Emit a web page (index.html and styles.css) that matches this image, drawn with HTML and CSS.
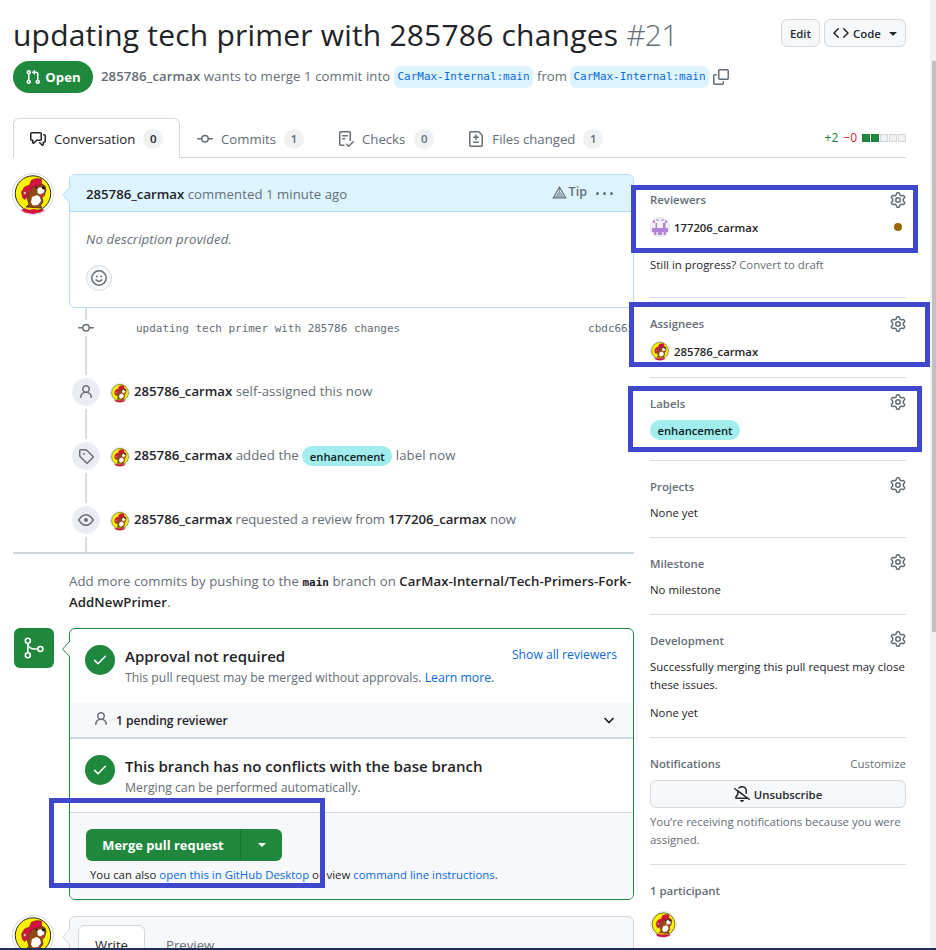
FILE: index.html
```html
<!DOCTYPE html>
<html lang="en">
<head>
<meta charset="utf-8">
<title>updating tech primer with 285786 changes #21</title>
<link rel="stylesheet" href="styles.css">
</head>
<body>
<svg class="defs" aria-hidden="true">
  <symbol id="pr" viewBox="0 0 16 16"><path d="M1.5 3.25a2.25 2.25 0 1 1 3 2.122v5.256a2.251 2.251 0 1 1-1.5 0V5.372A2.25 2.25 0 0 1 1.5 3.25Zm5.677-.177L9.573.677A.25.25 0 0 1 10 .854V2.5h1A2.5 2.5 0 0 1 13.5 5v5.628a2.251 2.251 0 1 1-1.5 0V5a1 1 0 0 0-1-1h-1v1.646a.25.25 0 0 1-.427.177L7.177 3.427a.25.25 0 0 1 0-.354ZM3.75 2.5a.75.75 0 1 0 0 1.5.75.75 0 0 0 0-1.5Zm0 9.5a.75.75 0 1 0 0 1.5.75.75 0 0 0 0-1.5Zm8.25.75a.75.75 0 1 0 1.5 0 .75.75 0 0 0-1.5 0Z"/></symbol>
  <symbol id="talk" viewBox="0 0 16 16"><path d="M1.75 1h8.5c.966 0 1.75.784 1.75 1.75v5.5A1.75 1.75 0 0 1 10.25 10H7.061l-2.574 2.573A1.458 1.458 0 0 1 2 11.543V10h-.25A1.75 1.75 0 0 1 0 8.25v-5.5C0 1.784.784 1 1.75 1ZM1.5 2.75v5.5c0 .138.112.25.25.25h1a.75.75 0 0 1 .75.75v2.19l2.72-2.72a.749.749 0 0 1 .53-.22h3.5a.25.25 0 0 0 .25-.25v-5.5a.25.25 0 0 0-.25-.25h-8.5a.25.25 0 0 0-.25.25Zm13 2a.25.25 0 0 0-.25-.25h-.5a.75.75 0 0 1 0-1.5h.5c.966 0 1.75.784 1.75 1.75v5.5A1.75 1.75 0 0 1 14.25 12H14v1.543a1.458 1.458 0 0 1-2.487 1.03L9.22 12.28a.749.749 0 0 1 .326-1.275.749.749 0 0 1 .734.215l2.22 2.22v-2.19a.75.75 0 0 1 .75-.75h1a.25.25 0 0 0 .25-.25Z"/></symbol>
  <symbol id="commit" viewBox="0 0 16 16"><path d="M11.93 8.5a4.002 4.002 0 0 1-7.86 0H.75a.75.75 0 0 1 0-1.5h3.32a4.002 4.002 0 0 1 7.86 0h3.32a.75.75 0 0 1 0 1.5Zm-1.43-.75a2.5 2.5 0 1 0-5 0 2.5 2.5 0 0 0 5 0Z"/></symbol>
  <symbol id="checks" viewBox="0 0 16 16"><path d="M2.5 1.75v11.5c0 .138.112.25.25.25h3.17a.75.75 0 0 1 0 1.5H2.75A1.75 1.75 0 0 1 1 13.25V1.75C1 .784 1.784 0 2.75 0h8.5C12.216 0 13 .784 13 1.75v7.736a.75.75 0 0 1-1.5 0V1.75a.25.25 0 0 0-.25-.25h-8.5a.25.25 0 0 0-.25.25Zm13.274 9.537v-.001l-4.557 4.45a.75.75 0 0 1-1.055-.008l-1.943-1.95a.75.75 0 0 1 1.062-1.058l1.419 1.425 4.026-3.932a.75.75 0 1 1 1.048 1.074ZM4.75 4h4.5a.75.75 0 0 1 0 1.5h-4.5a.75.75 0 0 1 0-1.5ZM4 7.75A.75.75 0 0 1 4.75 7h2a.75.75 0 0 1 0 1.5h-2A.75.75 0 0 1 4 7.75Z"/></symbol>
  <symbol id="diff" viewBox="0 0 16 16"><path d="M1 1.75C1 .784 1.784 0 2.75 0h7.586c.464 0 .909.184 1.237.513l2.914 2.914c.329.328.513.773.513 1.237v9.586A1.75 1.75 0 0 1 13.25 16H2.75A1.75 1.75 0 0 1 1 14.25Zm1.75-.25a.25.25 0 0 0-.25.25v12.5c0 .138.112.25.25.25h10.5a.25.25 0 0 0 .25-.25V4.664a.25.25 0 0 0-.073-.177l-2.914-2.914a.25.25 0 0 0-.177-.073ZM8 3.25a.75.75 0 0 1 .75.75v1.5h1.5a.75.75 0 0 1 0 1.5h-1.5v1.5a.75.75 0 0 1-1.5 0V7h-1.5a.75.75 0 0 1 0-1.5h1.5V4A.75.75 0 0 1 8 3.25Zm-3 8a.75.75 0 0 1 .75-.75h4.5a.75.75 0 0 1 0 1.5h-4.5a.75.75 0 0 1-.75-.75Z"/></symbol>
  <symbol id="copy" viewBox="0 0 16 16"><path d="M0 6.75C0 5.784.784 5 1.75 5h1.5a.75.75 0 0 1 0 1.5h-1.5a.25.25 0 0 0-.25.25v7.5c0 .138.112.25.25.25h7.5a.25.25 0 0 0 .25-.25v-1.5a.75.75 0 0 1 1.5 0v1.5A1.75 1.75 0 0 1 9.25 16h-7.5A1.75 1.75 0 0 1 0 14.25Z M5 1.75C5 .784 5.784 0 6.75 0h7.5C15.216 0 16 .784 16 1.75v7.5A1.75 1.75 0 0 1 14.25 11h-7.5A1.75 1.75 0 0 1 5 9.25Zm1.75-.25a.25.25 0 0 0-.25.25v7.5c0 .138.112.25.25.25h7.5a.25.25 0 0 0 .25-.25v-7.5a.25.25 0 0 0-.25-.25Z"/></symbol>
  <symbol id="code" viewBox="0 0 16 16"><path d="m11.28 3.22 4.25 4.25a.75.75 0 0 1 0 1.06l-4.25 4.25a.749.749 0 0 1-1.275-.326.749.749 0 0 1 .215-.734L13.94 8l-3.72-3.72a.749.749 0 0 1 .326-1.275.749.749 0 0 1 .734.215Zm-6.56 0a.751.751 0 0 1 1.042.018.751.751 0 0 1 .018 1.042L2.06 8l3.72 3.72a.749.749 0 0 1-.326 1.275.749.749 0 0 1-.734-.215L.47 8.53a.75.75 0 0 1 0-1.06Z"/></symbol>
  <symbol id="person" viewBox="0 0 16 16"><path d="M10.561 8.073a6.005 6.005 0 0 1 3.432 5.142.75.75 0 1 1-1.498.07 4.5 4.5 0 0 0-8.99 0 .75.75 0 0 1-1.498-.07 6.004 6.004 0 0 1 3.431-5.142 3.999 3.999 0 1 1 5.123 0ZM10.5 5a2.5 2.5 0 1 0-5 0 2.5 2.5 0 0 0 5 0Z"/></symbol>
  <symbol id="tag" viewBox="0 0 16 16"><path d="M1 7.775V2.75C1 1.784 1.784 1 2.75 1h5.025c.464 0 .91.184 1.238.513l6.25 6.25a1.75 1.75 0 0 1 0 2.474l-5.026 5.026a1.75 1.75 0 0 1-2.474 0l-6.25-6.25A1.752 1.752 0 0 1 1 7.775Zm1.5 0c0 .066.026.13.073.177l6.25 6.25a.25.25 0 0 0 .354 0l5.025-5.025a.25.25 0 0 0 0-.354l-6.25-6.25a.25.25 0 0 0-.177-.073H2.75a.25.25 0 0 0-.25.25ZM6 5a1 1 0 1 1 0 2 1 1 0 0 1 0-2Z"/></symbol>
  <symbol id="eye" viewBox="0 0 16 16"><path d="M8 2c1.981 0 3.671.992 4.933 2.078 1.27 1.091 2.187 2.345 2.637 3.023a1.62 1.62 0 0 1 0 1.798c-.45.678-1.367 1.932-2.637 3.023C11.67 13.008 9.981 14 8 14c-1.981 0-3.671-.992-4.933-2.078C1.797 10.83.88 9.576.43 8.898a1.62 1.62 0 0 1 0-1.798c.45-.677 1.367-1.931 2.637-3.022C4.33 2.992 6.019 2 8 2ZM1.679 7.932a.12.12 0 0 0 0 .136c.411.622 1.241 1.75 2.366 2.717C5.176 11.758 6.527 12.5 8 12.5c1.473 0 2.825-.742 3.955-1.715 1.124-.967 1.954-2.096 2.366-2.717a.12.12 0 0 0 0-.136c-.412-.621-1.242-1.75-2.366-2.717C10.824 4.242 9.473 3.5 8 3.5c-1.473 0-2.825.742-3.955 1.715-1.124.967-1.954 2.096-2.366 2.717ZM8 10a2 2 0 1 1-.001-3.999A2 2 0 0 1 8 10Z"/></symbol>
  <symbol id="gear" viewBox="0 0 16 16"><path d="M8 0a8.2 8.2 0 0 1 .701.031C9.444.095 9.99.645 10.16 1.29l.288 1.107c.018.066.079.158.212.224.231.114.454.243.668.386.123.082.233.09.299.071l1.103-.303c.644-.176 1.392.021 1.82.63.27.385.506.792.704 1.218.315.675.111 1.422-.364 1.891l-.814.806c-.049.048-.098.147-.088.294.016.257.016.515 0 .772-.01.147.038.246.088.294l.814.806c.475.469.679 1.216.364 1.891a7.977 7.977 0 0 1-.704 1.217c-.428.61-1.176.807-1.82.63l-1.102-.302c-.067-.019-.177-.011-.3.071a5.909 5.909 0 0 1-.668.386c-.133.066-.194.158-.211.224l-.29 1.106c-.168.646-.715 1.196-1.458 1.26a8.006 8.006 0 0 1-1.402 0c-.743-.064-1.289-.614-1.458-1.26l-.289-1.106c-.018-.066-.079-.158-.212-.224a5.738 5.738 0 0 1-.668-.386c-.123-.082-.233-.09-.299-.071l-1.103.303c-.644.176-1.392-.021-1.82-.63a8.12 8.12 0 0 1-.704-1.218c-.315-.675-.111-1.422.363-1.891l.815-.806c.05-.048.098-.147.088-.294a6.214 6.214 0 0 1 0-.772c.01-.147-.038-.246-.088-.294l-.815-.806C.635 6.045.431 5.298.746 4.623a7.92 7.92 0 0 1 .704-1.217c.428-.61 1.176-.807 1.82-.63l1.102.302c.067.019.177.011.3-.071.214-.143.437-.272.668-.386.133-.066.194-.158.211-.224l.29-1.106C6.009.645 6.556.095 7.299.03 7.53.01 7.764 0 8 0Zm-.571 1.525c-.036.003-.108.036-.137.146l-.289 1.105c-.147.561-.549.967-.998 1.189-.173.086-.34.183-.5.29-.417.278-.97.423-1.529.27l-1.103-.303c-.109-.03-.175.016-.195.045-.22.312-.412.644-.573.99-.014.031-.021.11.059.19l.815.806c.411.406.562.957.53 1.456a4.709 4.709 0 0 0 0 .582c.032.499-.119 1.05-.53 1.456l-.815.806c-.081.08-.073.159-.059.19.162.346.353.677.573.989.02.03.085.076.195.046l1.102-.303c.56-.153 1.113-.008 1.53.27.161.107.328.204.501.29.447.222.85.629.997 1.189l.289 1.105c.029.109.101.143.137.146a6.6 6.6 0 0 0 1.142 0c.036-.003.108-.036.137-.146l.289-1.105c.147-.561.549-.967.998-1.189.173-.086.34-.183.5-.29.417-.278.97-.423 1.529-.27l1.103.303c.109.029.175-.016.195-.045.22-.313.411-.644.573-.99.014-.031.021-.11-.059-.19l-.815-.806c-.411-.406-.562-.957-.53-1.456a4.709 4.709 0 0 0 0-.582c-.032-.499.119-1.05.53-1.456l.815-.806c.081-.08.073-.159.059-.19a6.464 6.464 0 0 0-.573-.989c-.02-.03-.085-.076-.195-.046l-1.102.303c-.56.153-1.113.008-1.53-.27a4.44 4.44 0 0 0-.501-.29c-.447-.222-.85-.629-.997-1.189l-.289-1.105c-.029-.11-.101-.143-.137-.146a6.6 6.6 0 0 0-1.142 0ZM11 8a3 3 0 1 1-6 0 3 3 0 0 1 6 0ZM9.5 8a1.5 1.5 0 1 0-3.001.001A1.5 1.5 0 0 0 9.5 8Z"/></symbol>
  <symbol id="bell" viewBox="0 0 16 16"><path d="m4.182 4.31.016.011 10.104 7.316.013.01 1.375.996a.75.75 0 1 1-.88 1.214L13.626 13H2.518a1.516 1.516 0 0 1-1.263-2.36l1.703-2.554A.255.255 0 0 0 3 7.947V5.305L.31 3.357a.75.75 0 1 1 .88-1.214Zm7.373 7.19L4.5 6.391v1.556c0 .346-.102.683-.294.97l-1.703 2.556a.017.017 0 0 0-.003.01c0 .005.002.009.005.012l.006.004.007.001ZM8 1.5c-.997 0-1.895.416-2.534 1.086A.75.75 0 1 1 4.38 1.55 5 5 0 0 1 13 5v2.373a.75.75 0 0 1-1.5 0V5A3.5 3.5 0 0 0 8 1.5ZM8 16a2 2 0 0 1-1.985-1.75c-.017-.137.097-.25.235-.25h3.5c.138 0 .252.113.235.25A2 2 0 0 1 8 16Z"/></symbol>
  <symbol id="tick" viewBox="0 0 16 16"><path d="M2.6 8.4 6 11.8l7.4-7.6" fill="none" stroke="currentColor" stroke-width="1.5" stroke-linecap="round" stroke-linejoin="round"/></symbol>
  <symbol id="beaver" viewBox="0 0 42 42">
    <circle cx="21" cy="21" r="20.5" fill="#fff" stroke="#d4d8dc"/>
    <circle cx="21" cy="20.500" r="17.700" fill="#fdf100" stroke="#2b2a1c"/>
    <path d="M9 37l4-1.500 4 1.500 5-1 5 1 4-1 1 1.500-4 2-7 1.500-8-1.500z" fill="#d31342"/>
    <path d="M14 34l3-3-2-6 3-6 2-6 8-3 5 3 1 4-2 6-2 1 1 5-3 4 2 1-1 1z" fill="#8f4a18" stroke="#43200c" stroke-width=".7"/>
    <path d="M20 24l5-2 3 2 1 4-3 4-5 .5-2-3z" fill="#fff"/>
    <path d="M25 15.500l3-1.500 4 1 .5 4-3 3-4-1.500z" fill="#fff" stroke="#5a3017" stroke-width=".4"/>
    <path d="M24 13.500l1 2" stroke="#111" stroke-width="1.400"/>
    <circle cx="31.500" cy="14.800" r="1.600" fill="#141414"/>
    <path d="M28.500 21l2.500-1 .5 3.500-2 .5z" fill="#d9304e"/>
    <path d="M9.500 19l3-5 5-2 2-5 5-1.500 5 .5v5.500l-9 2.500-3 4-2 6-3 2.500-2-2z" fill="#d31342" stroke="#7c0d2b" stroke-width=".5"/>
    <circle cx="12.800" cy="20" r="1.700" fill="#e8b9a0" stroke="#6a2a18" stroke-width=".6"/>
  </symbol>
</svg>

<div class="page">
  <header class="head">
    <h1 class="title">updating tech primer with 285786 changes <span class="num">#21</span></h1>
    <div class="actions">
      <button class="btn btn-edit">Edit</button>
      <button class="btn btn-code"><svg class="i"><use href="#code"/></svg>Code<span class="caret"></span></button>
    </div>
  </header>
  <div class="meta">
    <span class="state"><svg class="i"><use href="#pr"/></svg>Open</span>
    <span class="wants"><b>285786_carmax</b> wants to merge 1 commit into</span>
    <span class="branch">CarMax-Internal:main</span>
    <span class="from">from</span>
    <span class="branch">CarMax-Internal:main</span>
    <svg class="i copy"><use href="#copy"/></svg>
  </div>
  <nav class="tabs">
    <a class="tab on"><svg class="i"><use href="#talk"/></svg><span>Conversation</span><span class="count">0</span></a>
    <a class="tab"><svg class="i"><use href="#commit"/></svg><span>Commits</span><span class="count">1</span></a>
    <a class="tab checks"><svg class="i"><use href="#checks"/></svg><span>Checks</span><span class="count">0</span></a>
    <a class="tab"><svg class="i"><use href="#diff"/></svg><span>Files changed</span><span class="count">1</span></a>
    <div class="stat"><span class="plus">+2</span><span class="minus">−0</span><span class="sq"><i class="g"></i><i class="g"></i><i></i><i></i><i></i></span></div>
  </nav>

  <div class="cols">
    <main class="main">
      <section class="comment">
        <svg class="ava42"><use href="#beaver"/></svg>
        <div class="bubble blue">
          <svg class="notch" viewBox="0 0 8 16"><path d="M8 0 .7 8 8 16" fill="#ddf4ff" stroke="#b3dcfb"/></svg>
          <div class="bhead"><span><b>285786_carmax</b> commented 1 minute ago</span>
            <span class="tip"><svg class="tri" viewBox="0 0 16 14" fill="none" stroke="#656d76"><path d="M8 1.200 14.800 12.800H1.200Z" stroke-width="1.200"/><path d="M8 5.800 11.200 11H4.800Z" stroke-width=".9"/><path d="M8 1v5M1.500 12.800l3.500-2M14.500 12.800l-3.500-2M8 8l1 1.800H7z" stroke-width=".7"/></svg>Tip</span>
            <span class="dots"><i></i><i></i><i></i></span>
          </div>
          <div class="bbody"><em>No description provided.</em>
            <span class="react"><svg class="smile" viewBox="0 0 16 16" fill="none" stroke="#656d76" stroke-width="1.500"><circle cx="8" cy="8" r="7.200"/><path d="M5.200 9.800c1.200 1.900 4.400 1.900 5.600 0" stroke-linecap="round"/><path d="M5 6.500h1.800M9.200 6.500H11" stroke-width="1.700"/></svg></span>
          </div>
        </div>
      </section>
      <section class="line">
        <div class="crow"><span class="cicon"><svg class="i"><use href="#commit"/></svg></span><span class="cmsg">updating tech primer with 285786 changes</span><span class="sha">cbdc665</span></div>
        <div class="ev"><span class="badge"><svg class="i"><use href="#person"/></svg></span><svg class="ava20"><use href="#beaver"/></svg><span class="evt"><b>285786_carmax</b> self-assigned this now</span></div>
        <div class="ev"><span class="badge"><svg class="i"><use href="#tag"/></svg></span><svg class="ava20"><use href="#beaver"/></svg><span class="evt"><b>285786_carmax</b> added the <span class="label">enhancement</span> label now</span></div>
        <div class="ev"><span class="badge"><svg class="i"><use href="#eye"/></svg></span><svg class="ava20"><use href="#beaver"/></svg><span class="evt tight"><b>285786_carmax</b> requested a review from <b>177206_carmax</b> now</span></div>
      </section>
      <p class="push">Add more commits by pushing to the <code>main</code> branch on <b>CarMax-Internal/Tech-Primers-Fork-<br>AddNewPrimer</b>.</p>
      <section class="merge">
        <span class="micon"><svg viewBox="0 0 24 24" fill="none" stroke="#fff" stroke-width="1.600"><circle cx="5.800" cy="4.800" r="2.500"/><circle cx="5.800" cy="19.200" r="2.500"/><circle cx="18.400" cy="13" r="2.500"/><path d="M5.800 7.300v9.400M5.800 7.500c.4 3.500 3.500 5.500 7 5.500h3"/></svg></span>
        <div class="bubble green">
          <svg class="notch" viewBox="0 0 8 16"><path d="M8 0 .7 8 8 16" fill="#fff" stroke="#1f883d"/></svg>
          <div class="mrow r1"><span class="ok"><svg class="i"><use href="#tick"/></svg></span><div class="mtxt"><h3>Approval not required</h3><p>This pull request may be merged without approvals. <a>Learn more.</a></p></div><a class="show">Show all reviewers</a></div>
          <div class="pend"><svg class="i"><use href="#person"/></svg><span>1 pending reviewer</span><svg class="chev" viewBox="0 0 16 16"><path d="M3.500 6 8 10.500 12.500 6" fill="none" stroke="#1f2328" stroke-width="1.700"/></svg></div>
          <div class="mrow r2"><span class="ok"><svg class="i"><use href="#tick"/></svg></span><div class="mtxt"><h3>This branch has no conflicts with the base branch</h3><p>Merging can be performed automatically.</p></div></div>
          <div class="mfoot">
            <div class="mbtn"><span class="mb1">Merge pull request</span><span class="mb2"><i class="caret"></i></span></div>
            <p>You can also <a>open this in GitHub Desktop</a> or view <a>command line instructions</a>.</p>
          </div>
        </div>
      </section>
      <section class="comment write">
        <svg class="ava42"><use href="#beaver"/></svg>
        <div class="bubble gray">
          <svg class="notch" viewBox="0 0 8 16"><path d="M8 0 .7 8 8 16" fill="#f6f8fa" stroke="#d0d7de"/></svg>
          <span class="wtab">Write</span><span class="ptab">Preview</span>
        </div>
      </section>
    </main>

    <aside class="side">
      <section class="s1"><div class="st">Reviewers<svg class="i"><use href="#gear"/></svg></div>
        <div class="user"><svg class="ava20" viewBox="0 0 20 20"><circle cx="10" cy="10" r="9.700" fill="#f0f0f0" stroke="#d9dcdf" stroke-width=".6"/><path d="M3 3.500h2v2.500h2v5h2V3.500h-3v-1h3v8.500h2V2.500h3v1h-3V11h2V6h2V3.500h2V6h-1.500v5H18v4h-2v3h-2.500v-3h-1.500v3H8v-3H6.500v3H4v-3H2v-4h3.500V6H3z" fill="#b283d8"/></svg><span>177206_carmax</span><i class="dot"></i></div>
        <p class="draft">Still in progress? <span>Convert to draft</span></p></section>
      <section class="s2"><div class="st">Assignees<svg class="i"><use href="#gear"/></svg></div>
        <div class="user"><svg class="ava20"><use href="#beaver"/></svg><span>285786_carmax</span></div></section>
      <section class="s3"><div class="st up">Labels<svg class="i"><use href="#gear"/></svg></div><span class="label">enhancement</span></section>
      <section class="s4"><div class="st up">Projects<svg class="i"><use href="#gear"/></svg></div><p>None yet</p></section>
      <section class="s4"><div class="st up">Milestone<svg class="i"><use href="#gear"/></svg></div><p>No milestone</p></section>
      <section class="s6"><div class="st up">Development<svg class="i"><use href="#gear"/></svg></div><p>Successfully merging this pull request may close<br>these issues.</p><p class="none">None yet</p></section>
      <section class="s7"><div class="st">Notifications<span>Customize</span></div><button class="btn wide"><svg class="i"><use href="#bell"/></svg>Unsubscribe</button><p class="why">You’re receiving notifications because you were<br>assigned.</p></section>
      <section class="s8"><div class="st">1 participant</div><svg class="ava26"><use href="#beaver"/></svg></section>
    </aside>
  </div>

  <div class="mark m1"></div><div class="mark m2"></div><div class="mark m3"></div><div class="mark m4"></div>
  <div class="scroll"><div class="thumb"></div></div>
  <div class="bottom"></div>
</div>
</body>
</html>
```
FILE: styles.css
```css
* { box-sizing: border-box; }
body { margin: 0; background: #fff; color: #1f2328; font-family: "Open Sans", "Noto Sans", sans-serif; font-size: 13.2px; line-height: 20px; }
h1, h3, p { margin: 0; font-weight: 400; }
b { font-weight: 600; }
a { color: #0969da; }
button { font-family: inherit; }
.defs { position: absolute; width: 0; height: 0; }
.page { position: relative; width: 936px; height: 950px; overflow: hidden; }
.i { width: 16px; height: 16px; fill: currentColor; flex: none; display: block; }

.head { display: flex; justify-content: space-between; height: 61px; padding: 15px 30px 0 13px; }
.title { font-size: 30px; line-height: 40px; white-space: nowrap; letter-spacing: .2px; }
.num { font-weight: 300; color: #656d76; letter-spacing: -.7px; }
.actions { display: flex; gap: 4px; padding-top: 4px; }
.btn { display: flex; align-items: center; justify-content: center; height: 28px; padding: 1px 8px 0; border: 1px solid #d5d9dd; border-radius: 6px; background: #f6f8fa; color: #24292f; font-size: 11.4px; font-weight: 600; line-height: 18px; }
.btn-edit { width: 39px; padding: 1px 0 0; }
.caret { width: 0; height: 0; border: 4px solid transparent; border-top-color: currentColor; border-bottom: 0; }
.btn-code { width: 82px; gap: 4px; }
.btn-code .i { margin-top: -2px; }
.btn-code .caret { margin-left: 4px; }

.meta { display: flex; align-items: center; height: 32px; padding-left: 13px; color: #656d76; white-space: nowrap; }
.state { display: flex; align-items: center; justify-content: center; gap: 4px; width: 80px; height: 32px; border-radius: 16px; background: #1f883d; color: #fff; font-weight: 700; }
.wants { width: 301px; padding: 0 0 2px 8px; letter-spacing: .08px; }
.branch { width: 139px; height: 22px; border-radius: 6px; background: #ddf4ff; color: #0969da; font: 11px/22px "DejaVu Sans Mono", monospace; letter-spacing: -.02px; text-align: center; }
.from { width: 37px; padding: 0 0 2px 4px; }
.copy { margin-left: 4px; }

.tabs { display: flex; height: 40px; margin: 25px 30px 0 13px; box-shadow: inset 0 -1px #d0d7de; color: #656d76; }
.tab { display: flex; align-items: center; height: 40px; padding: 2px 16px 0 17px; gap: 8px; color: #656d76; }
.tab.on { width: 167px; padding-left: 16px; border: 1px solid #d0d7de; border-bottom: 0; border-radius: 6px 6px 0 0; background: #fff; color: #1f2328; padding-top: 1px; }
.tab.checks { padding-left: 18px; padding-right: 17px; }
.checks .count { margin-left: 1px; }
.count { width: 20px; height: 20px; border-radius: 10px; background: #eff1f3; font-size: 11.500px; font-weight: 600; line-height: 20px; text-align: center; }
.stat { display: flex; align-items: center; margin-left: auto; gap: 5px; font-size: 12px; }
.plus { color: #1a7f37; } .minus { color: #d1242f; }
.sq { display: flex; gap: 1px; }
.sq i { width: 8px; height: 8px; background: #eff1f3; border: 1px solid #d5d8db; }
.sq .g { background: #1f883d; border-color: #1a7f37; }

.cols { display: flex; gap: 16px; padding: 16px 0 0 13px; }
.main { width: 621px; flex: none; }
.comment, .merge { display: flex; }
.ava42 { width: 42px; height: 42px; margin: -1px 15px 0 -1px; flex: none; }
.ava20 { width: 20px; height: 20px; flex: none; }
.bubble { position: relative; width: 565px; border: 1px solid; border-radius: 6px; }
.notch { position: absolute; left: -8px; top: 12px; width: 8px; height: 16px; }
.blue { height: 134px; border-color: #b3dcfb; }
.bhead { display: flex; align-items: center; height: 37px; padding-left: 16px; padding-top: 1px; background: #ddf4ff; border-bottom: 1px solid #b3dcfb; border-radius: 5px 5px 0 0; color: #656d76; letter-spacing: .05px; }
.bhead b { color: #1f2328; letter-spacing: 0; }
.tip { display: flex; align-items: center; gap: 2px; margin-left: auto; margin-top: -3px; font-size: 12.500px; font-weight: 600; }
.tri { width: 15px; height: 13px; }
.dots { display: flex; gap: 4px; margin: 0 20px 0 9px; }
.dots i { width: 3px; height: 3px; border-radius: 50%; background: #656d76; }
.bbody { padding: 17px 16px; color: #656d76; }
em { display: block; letter-spacing: .12px; }
.react { display: flex; align-items: center; justify-content: center; width: 26px; height: 26px; margin-top: 16px; border: 1px solid #d8dee4; border-radius: 50%; background: #f6f8fa; }
.smile { width: 16px; height: 16px; }

.line { height: 246px; border-bottom: 2px solid #d0d7de; background: linear-gradient(#d8dee4, #d8dee4) 72px 0 / 2px 100% no-repeat; color: #656d76; }
.crow { display: flex; align-items: center; height: 40px; padding: 0 0 0 65px; font: 11px "DejaVu Sans Mono", monospace; letter-spacing: -.02px; white-space: nowrap; }
.cicon { background: #fff; width: 16px; height: 16px; }
.cmsg { margin-left: 42px; }
.sha { margin-left: 188px; }
.crow + .ev { margin-top: 28px; }
.ev { display: flex; height: 32px; margin-bottom: 32px; padding-left: 57px; white-space: nowrap; }
.badge { display: flex; align-items: center; justify-content: center; width: 32px; height: 32px; border: 2px solid #fff; border-radius: 50%; background: #eaeef2; background-clip: padding-box; box-shadow: 0 0 0 1px #fff; }
.ev .ava20 { margin: 7px 4px 0 8px; }
.evt { padding-top: 5px; letter-spacing: .06px; }
.tight { letter-spacing: -.06px; }
.ev b { color: #1f2328; letter-spacing: 0; }
.label { display: inline-block; width: 90px; height: 20px; border-radius: 10px; background: #a2eeef; color: #0b1b1b; font-size: 11.200px; font-weight: 600; line-height: 21px; text-align: center; letter-spacing: 0; }
.evt .label { position: relative; top: 1px; }

.push { padding: 17px 0 0 56px; line-height: 21px; color: #656d76; white-space: nowrap; letter-spacing: .07px; }
.push b, code { color: #1f2328; }
code { font: 700 11px "DejaVu Sans Mono", monospace; letter-spacing: 0; }
.merge { margin-top: 15px; }
.micon { display: flex; align-items: center; justify-content: center; width: 40px; height: 40px; margin: 0 15px 0 1px; border-radius: 6px; background: #1f883d; flex: none; }
.micon svg { width: 24px; height: 24px; }
.green { height: 272px; border-color: #1f883d; }
.mrow { display: flex; padding: 16px 16px 0 15px; }
.r1 { height: 74px; } .r2 { height: 74px; border-bottom: 1px solid #d0d7de; }
.ok { display: flex; align-items: center; justify-content: center; width: 30px; height: 30px; border-radius: 50%; background: #1f883d; color: #fff; }
.mtxt { margin: -1px 0 0 10px; white-space: nowrap; }
h3 { font-size: 15px; line-height: 24px; font-weight: 600; }
.mtxt p { margin-top: 1px; font-size: 12.250px; line-height: 18px; color: #656d76; }
.show { margin: 1px 0 0 auto; font-size: 12.200px; line-height: 18px; }
.pend { display: flex; align-items: center; height: 36px; padding: 0 16px 0 23px; background: #f6f8fa; border-bottom: 2px solid #d0d7de; font-size: 12.100px; font-weight: 600; color: #656d76; }
.pend .i { margin-top: -2px; }
.pend span { margin: 1px 0 0 7px; color: #1f2328; }
.chev { width: 16px; height: 16px; margin-left: auto; }
.mfoot { height: 86px; padding: 16px; background: #f6f8fa; border-radius: 0 0 5px 5px; }
.mbtn { display: flex; width: 196px; height: 32px; border-radius: 6px; background: #1f883d; color: #fff; font-size: 12.900px; font-weight: 700; }
.mb1 { width: 155px; line-height: 32px; text-align: center; border-right: 1px solid #1a7435; }
.mb2 { display: flex; flex: 1; align-items: center; justify-content: center; }
.mfoot p { padding: 5px 0 0 4px; font-size: 11.400px; line-height: 18px; white-space: nowrap; }
.write { margin-top: 16px; }
.gray { display: flex; height: 60px; padding: 8px; border-color: #d0d7de; background: #f6f8fa; }
.wtab { width: 67px; height: 50px; border: 1px solid #d0d7de; border-radius: 6px 6px 0 0; background: #fff; line-height: 38px; text-align: center; }
.ptab { margin-left: 21px; line-height: 40px; color: #656d76; }

.side { width: 256px; font-size: 11.400px; line-height: 18px; white-space: nowrap; }
.side section { padding-top: 17px; border-bottom: 1px solid #d8dee4; }
.st { display: flex; justify-content: space-between; align-items: center; height: 18px; color: #656d76; font-weight: 600; }
.st span { font-weight: 400; }
.up .i { margin-top: -4px; }
.user { display: flex; align-items: center; gap: 4px; height: 20px; margin-top: 8px; font-size: 11.300px; font-weight: 600; }
.user span { padding-top: 2px; }
.dot { width: 8px; height: 8px; margin: 0 4px 0 auto; border-radius: 50%; background: #9a6700; }
.s1 { height: 124px; } .s2 { height: 80px; } .s3 { height: 83px; } .s4 { height: 77px; }
.s6 { height: 123px; } .s7 { height: 127px; }
.side .s8 { border: 0; }
.draft { margin-top: 19px; } .draft span, .why { color: #656d76; }
.s3 .label { display: block; margin-top: 7px; }
.s4 p, .s6 p { margin-top: 8px; }
.s6 .none { margin-top: 10px; }
.wide { width: 256px; margin: 7px 0 5px; gap: 4px; }
.wide .i { margin-top: -2px; }
.ava26 { display: block; width: 27px; height: 27px; margin-top: 11px; }

.mark { position: absolute; border: 5px solid #3f48cc; }
.m1 { left: 631px; top: 185px; width: 287px; height: 68px; }
.m2 { left: 629px; top: 302px; width: 301px; height: 65px; }
.m3 { left: 628px; top: 386px; width: 294px; height: 66px; }
.m4 { left: 49px; top: 798px; width: 276px; height: 90px; }
.scroll { position: absolute; left: 930px; top: 0; width: 6px; height: 948px; padding: 61px 0 0 2px; background: #f1f1f1; }
.thumb { height: 571px; background: #c1c1c1; }
.bottom { position: absolute; left: 0; top: 948px; width: 936px; height: 2px; background: #1c2f55; }
```
